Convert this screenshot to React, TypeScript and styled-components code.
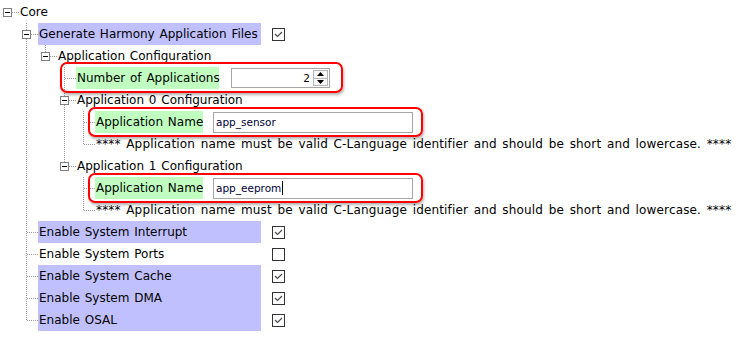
import React from "react";
import styled, { createGlobalStyle, css } from "styled-components";

const GlobalStyle = createGlobalStyle`
  html, body { margin: 0; padding: 0; background: #ffffff; }
  body {
    font-family: "DejaVu Sans", Verdana, sans-serif;
    font-size: 12px;
    color: #000000;
  }
`;

const LINE = "#9a9a9a";
const dotsV = `repeating-linear-gradient(to bottom, ${LINE} 0 1px, transparent 1px 2px)`;
const dotsH = `repeating-linear-gradient(to right, ${LINE} 0 1px, transparent 1px 2px)`;

type Tone = "purple" | "green" | "note";
type Field =
  | { kind: "check"; checked: boolean }
  | { kind: "spin"; value: number }
  | { kind: "text"; value: string; caret?: boolean };

type Callout = { left: number; top: number; width: number; height: number };

type TreeNode = {
  id: string;
  label: string;
  tone?: Tone;
  labelWidth?: number;
  gap?: number;
  field?: Field;
  callout?: Callout;
  children?: TreeNode[];
};

const NOTE =
  "**** Application name must be valid C-Language identifier and should be short and lowercase. ****";

const appConfig = (n: number, name: string, caret?: boolean): TreeNode => ({
  id: `app${n}`,
  label: `Application ${n} Configuration`,
  children: [
    {
      id: `app${n}-name`,
      label: "Application Name",
      tone: "green",
      labelWidth: 108,
      gap: 10,
      field: { kind: "text", value: name, caret },
      callout: { left: 12, top: -4, width: 335, height: 30 },
    },
    { id: `app${n}-note`, label: NOTE, tone: "note" },
  ],
});

const tree: TreeNode = {
  id: "core",
  label: "Core",
  children: [
    {
      id: "gen",
      label: "Generate Harmony Application Files",
      tone: "purple",
      labelWidth: 223,
      gap: 11,
      field: { kind: "check", checked: true },
      children: [
        {
          id: "appcfg",
          label: "Application Configuration",
          children: [
            {
              id: "count",
              label: "Number of Applications",
              tone: "green",
              labelWidth: 143,
              gap: 12,
              field: { kind: "spin", value: 2 },
              callout: { left: 3, top: -5, width: 283, height: 31 },
            },
            appConfig(0, "app_sensor"),
            appConfig(1, "app_eeprom", true),
          ],
        },
      ],
    },
    { id: "irq", label: "Enable System Interrupt", tone: "purple", labelWidth: 223, gap: 11, field: { kind: "check", checked: true } },
    { id: "ports", label: "Enable System Ports", labelWidth: 223, gap: 11, field: { kind: "check", checked: false } },
    { id: "cache", label: "Enable System Cache", tone: "purple", labelWidth: 223, gap: 11, field: { kind: "check", checked: true } },
    { id: "dma", label: "Enable System DMA", tone: "purple", labelWidth: 223, gap: 11, field: { kind: "check", checked: true } },
    { id: "osal", label: "Enable OSAL", tone: "purple", labelWidth: 223, gap: 11, field: { kind: "check", checked: true } },
  ],
};

const renderField = (field: Field, gap: number) => {
  if (field.kind === "check") {
    return (
      <CheckBox $gap={gap}>
        {field.checked && (
          <svg width="11" height="11" viewBox="0 0 11 11">
            <path d="M2 5 L4.5 7.5 L9 3" fill="none" stroke="#4a4a4a" strokeWidth="1.2" />
          </svg>
        )}
      </CheckBox>
    );
  }
  if (field.kind === "spin") {
    return (
      <SpinField $gap={gap}>
        <SpinValue>{field.value}</SpinValue>
        <SpinButtons>
          <SpinButton>
            <svg width="7" height="4" viewBox="0 0 7 4"><path d="M0 4 L3.5 0 L7 4 Z" fill="#000" /></svg>
          </SpinButton>
          <SpinButton>
            <svg width="7" height="4" viewBox="0 0 7 4"><path d="M0 0 L3.5 4 L7 0 Z" fill="#000" /></svg>
          </SpinButton>
        </SpinButtons>
      </SpinField>
    );
  }
  return (
    <TextField $gap={gap}>
      {field.value}
      {field.caret && <Caret />}
    </TextField>
  );
};

const TreeItem = ({ node, root, last }: { node: TreeNode; root?: boolean; last?: boolean }) => {
  const kids = node.children ?? [];
  return (
    <Node $root={root} $last={last}>
      <Row>
        {node.callout && (
          <CalloutFrame
            style={{
              left: node.callout.left,
              top: node.callout.top,
              width: node.callout.width,
              height: node.callout.height,
            }}
          />
        )}
        <Expander $visible={kids.length > 0} />
        <Label $tone={node.tone} $width={node.labelWidth}>
          {node.label}
        </Label>
        {node.field && renderField(node.field, node.gap ?? 11)}
      </Row>
      {kids.length > 0 && (
        <Branch>
          {kids.map((k, i) => (
            <TreeItem key={k.id} node={k} last={i === kids.length - 1} />
          ))}
        </Branch>
      )}
    </Node>
  );
};

const App = () => (
  <>
    <GlobalStyle />
    <Page>
      <Branch $root>
        <TreeItem node={tree} root last />
      </Branch>
    </Page>
  </>
);

const Page = styled.div`
  width: 746px;
  height: 337px;
  padding-top: 1px;
  box-sizing: border-box;
  overflow: hidden;
  background: #ffffff;
`;

const Branch = styled.ul<{ $root?: boolean }>`
  list-style: none;
  margin: 0;
  padding: 0 0 0 ${(p) => (p.$root ? 0 : 19)}px;
`;

const Node = styled.li<{ $root?: boolean; $last?: boolean }>`
  position: relative;
  ${(p) =>
    !p.$root &&
    css`
      &::before {
        content: "";
        position: absolute;
        left: 7px;
        top: 0;
        width: 1px;
        height: ${p.$last ? "11px" : "100%"};
        background: ${dotsV};
      }
    `}
`;

const Row = styled.div`
  position: relative;
  height: 22px;
  display: flex;
  align-items: center;
  white-space: nowrap;

  &::after {
    content: "";
    position: absolute;
    left: 8px;
    top: 11px;
    width: 11px;
    height: 1px;
    background: ${dotsH};
  }
`;

const Expander = styled.span<{ $visible: boolean }>`
  position: relative;
  z-index: 1;
  flex: none;
  width: 9px;
  height: 9px;
  margin: 0 7px 0 3px;
  box-sizing: border-box;
  visibility: ${(p) => (p.$visible ? "visible" : "hidden")};
  border: 1px solid #7f7f7f;
  background: #ffffff;

  &::after {
    content: "";
    position: absolute;
    left: 1px;
    top: 3px;
    width: 5px;
    height: 1px;
    background: #000000;
  }
`;

const Label = styled.span<{ $tone?: Tone; $width?: number }>`
  position: relative;
  z-index: 1;
  flex: none;
  height: 22px;
  display: inline-flex;
  align-items: center;
  padding: 0 1px;
  box-sizing: border-box;
  word-spacing: 1px;
  width: ${(p) => (p.$width ? `${p.$width}px` : "auto")};
  background: ${(p) =>
    p.$tone === "purple" ? "#c0c0ff" : p.$tone === "green" ? "#c0ffc0" : "transparent"};
  ${(p) =>
    p.$tone === "note" &&
    css`
      letter-spacing: 0.15px;
      word-spacing: 1.7px;
    `}
`;

const CheckBox = styled.span<{ $gap: number }>`
  flex: none;
  width: 13px;
  height: 13px;
  margin-left: ${(p) => p.$gap}px;
  box-sizing: border-box;
  border: 1px solid #333333;
  background: #ffffff;
  display: flex;
  align-items: center;
  justify-content: center;
`;

const fieldBase = css<{ $gap: number }>`
  flex: none;
  margin-left: ${(p) => p.$gap}px;
  box-sizing: border-box;
  border: 1px solid #a5a5a5;
  background: #ffffff;
  font-family: "DejaVu Sans", Tahoma, sans-serif;
  font-size: 10.5px;
  display: flex;
  align-items: center;
`;

const SpinField = styled.div<{ $gap: number }>`
  ${fieldBase};
  width: 99px;
  height: 20px;
  padding: 1px;
  justify-content: flex-end;
`;

const SpinValue = styled.span`
  padding-right: 3px;
  color: #000000;
`;

const SpinButtons = styled.div`
  display: flex;
  flex-direction: column;
  width: 15px;
  height: 16px;
`;

const SpinButton = styled.span`
  flex: 1;
  display: flex;
  align-items: center;
  justify-content: center;
  border: 1px solid #b5b5b5;
  background: #f7f7f7;
  &:first-child { border-bottom: none; }
`;

const TextField = styled.div<{ $gap: number }>`
  ${fieldBase};
  width: 200px;
  height: 21px;
  padding-left: 2px;
  color: #00003a;
`;

const Caret = styled.span`
  width: 1px;
  height: 14px;
  margin-left: 1px;
  background: #000000;
`;

const CalloutFrame = styled.span`
  position: absolute;
  z-index: 2;
  box-sizing: border-box;
  border: 2px solid #ff0000;
  border-radius: 7px;
  box-shadow: 1px 2px 3px rgba(0, 0, 0, 0.3);
  pointer-events: none;
`;

export default App;
